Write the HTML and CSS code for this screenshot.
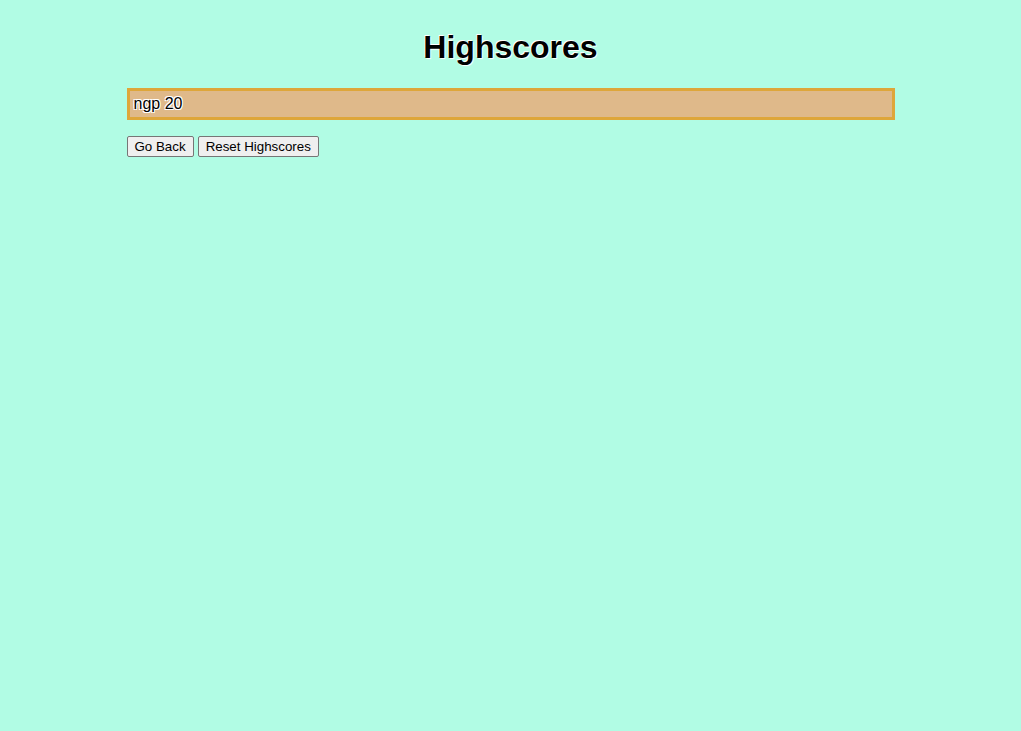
FILE: index.html
```html
<!DOCTYPE html>
<html>
<head>
<meta charset="utf-8">
<link rel="stylesheet" href="styles.css">
</head>
<body>
<div class="page">
  <h1 class="title">Highscores</h1>
  <div class="score">ngp 20</div>
  <div class="actions">
    <button class="btn">Go Back</button>
    <button class="btn">Reset Highscores</button>
  </div>
</div>
</body>
</html>
```
FILE: styles.css
```css
html, body {
  margin: 0;
  padding: 0;
  background: #b1fce4;
  font-family: "Liberation Sans", Arial, sans-serif;
}
.page {
  width: 768px;
  margin: 0 auto;
  padding-top: 8px;
}
.title {
  margin: 21px 0 22px;
  font-size: 32px;
  line-height: 37px;
  font-weight: bold;
  text-align: center;
  color: #000;
  text-shadow: 1px 1px 1px #fff, -1px -1px 0 #fff;
}
.score {
  box-sizing: border-box;
  height: 32px;
  border: 3px solid #dea63a;
  background: #dfb98a;
  padding: 0 4px;
  font-size: 16px;
  line-height: 26px;
  color: #000;
  text-shadow: 1px 1px 0 #fff, -1px -1px 0 #fff, 1px -1px 0 #fff, -1px 1px 0 #fff;
}
.actions {
  display: flex;
  gap: 4px;
  margin-top: 16px;
}
.btn {
  font-family: "Liberation Sans", Arial, sans-serif;
  font-size: 13.33px;
  height: 21px;
  padding: 0 7px;
  background: #efefef;
  border: 1px solid #767676;
  border-radius: 2px;
  color: #000;
}
```
